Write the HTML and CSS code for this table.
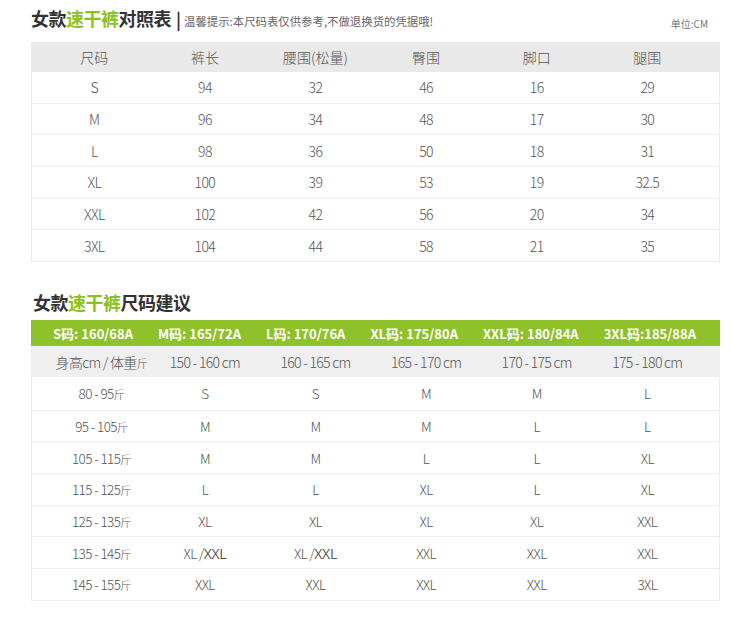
FILE: index.html
```html
<!DOCTYPE html>
<html lang="zh-CN">
<head>
<meta charset="utf-8">
<title>女款速干裤对照表</title>
<link rel="stylesheet" href="styles.css">
</head>
<body>
<div class="page">
  <div class="head1">
    <h2 class="title">女款<span class="green">速干裤</span>对照表</h2>
    <span class="bar">|</span>
    <span class="tip">温馨提示:本尺码表仅供参考,不做退换货的凭据哦!</span>
    <span class="unit">单位:CM</span>
  </div>
  <div class="t1">
    <div class="t1-head row6">
      <span>尺码</span><span>裤长</span><span>腰围(松量)</span><span>臀围</span><span>脚口</span><span>腿围</span>
    </div>
    <div class="t1-row row6"><span>S</span><span>94</span><span>32</span><span>46</span><span>16</span><span>29</span></div>
    <div class="t1-row row6"><span>M</span><span>96</span><span>34</span><span>48</span><span>17</span><span>30</span></div>
    <div class="t1-row row6"><span>L</span><span>98</span><span>36</span><span>50</span><span>18</span><span>31</span></div>
    <div class="t1-row row6"><span>XL</span><span>100</span><span>39</span><span>53</span><span>19</span><span>32.5</span></div>
    <div class="t1-row row6"><span>XXL</span><span>102</span><span>42</span><span>56</span><span>20</span><span>34</span></div>
    <div class="t1-row row6"><span>3XL</span><span>104</span><span>44</span><span>58</span><span>21</span><span>35</span></div>
  </div>

  <h2 class="title title2">女款<span class="green">速干裤</span>尺码建议</h2>
  <div class="t2">
    <div class="t2-green">
      <span>S码: 160/68A</span><span>M码: 165/72A</span><span>L码: 170/76A</span><span>XL码: 175/80A</span><span>XXL码: 180/84A</span><span>3XL码:185/88A</span>
    </div>
    <div class="t2-sub row6">
      <span class="c0">身高cm / 体重<small>斤</small></span><span>150 - 160 cm</span><span>160 - 165 cm</span><span>165 - 170 cm</span><span>170 - 175 cm</span><span>175 - 180 cm</span>
    </div>
    <div class="t2-row row6"><span class="c0">80 - 95<small>斤</small></span><span>S</span><span>S</span><span>M</span><span>M</span><span>L</span></div>
    <div class="t2-row row6"><span class="c0">95 - 105<small>斤</small></span><span>M</span><span>M</span><span>M</span><span>L</span><span>L</span></div>
    <div class="t2-row row6"><span class="c0">105 - 115<small>斤</small></span><span>M</span><span>M</span><span>L</span><span>L</span><span>XL</span></div>
    <div class="t2-row row6"><span class="c0">115 - 125<small>斤</small></span><span>L</span><span>L</span><span>XL</span><span>L</span><span>XL</span></div>
    <div class="t2-row row6"><span class="c0">125 - 135<small>斤</small></span><span>XL</span><span>XL</span><span>XL</span><span>XL</span><span>XXL</span></div>
    <div class="t2-row row6"><span class="c0">135 - 145<small>斤</small></span><span>XL /<b>XXL</b></span><span>XL /<b>XXL</b></span><span>XXL</span><span>XXL</span><span>XXL</span></div>
    <div class="t2-row row6"><span class="c0">145 - 155<small>斤</small></span><span>XXL</span><span>XXL</span><span>XXL</span><span>XXL</span><span>3XL</span></div>
  </div>
</div>
</body>
</html>
```

FILE: styles.css
```css
* { box-sizing: border-box; margin: 0; padding: 0; }
body {
  width: 750px;
  background: #fff;
  font-family: "Noto Sans CJK SC", "Noto Sans", sans-serif;
  color: #555;
}
.page {
  padding-left: 31px;
  width: 720px;
}
.head1 {
  display: flex;
  align-items: baseline;
  height: 42px;
  padding-top: 6px;
}
.title {
  font-size: 18px;
  font-weight: 700;
  color: #333;
  line-height: 24px;
  letter-spacing: -0.5px;
}
.green { color: #8cc11f; }
.bar {
  font-size: 17px;
  font-weight: 700;
  color: #333;
  margin-left: 5px;
  margin-right: 3px;
}
.tip {
  font-size: 11.4px;
  color: #666;
  letter-spacing: 0;
}
.unit {
  margin-left: auto;
  margin-right: 12px;
  font-size: 10px;
  color: #777;
  position: relative;
  top: 2px;
}
.row6 {
  display: grid;
  grid-template-columns: repeat(6, 110.6px);
  padding-left: 7px;
  align-items: center;
  text-align: center;
}
.t1 {
  width: 689px;
  border-left: 1px solid #ececec;
  border-right: 1px solid #ececec;
}
.t1-head {
  background: #e9e9e9;
  height: 30px;
  font-size: 14px;
  font-weight: 300;
  color: #555;
  margin: 0 -1px;
  padding-left: 8px;
}
.t1-row {
  height: 31.7px;
  border-bottom: 1.5px solid #ededed;
  font-size: 14px;
  font-weight: 300;
  letter-spacing: -0.6px;
}
.t1-row:first-of-type { height: 33px; }
.title2 {
  margin-top: 28px;
  margin-left: 2px;
  height: 30px;
}
.t2 {
  width: 689px;
  border-left: 1px solid #ececec;
  border-right: 1px solid #ececec;
}
.t2-green {
  background: #8fc12a;
  height: 26px;
  margin: 0 -1px;
  display: flex;
  justify-content: space-between;
  align-items: center;
  padding: 0 24px 0 22px;
  color: #fff;
  font-size: 13px;
  font-weight: 700;
}
.t2-sub {
  background: #efeff0;
  height: 31px;
  margin: 0 -1px;
  padding-left: 8px;
  font-size: 14px;
  font-weight: 300;
  letter-spacing: -0.7px;
}
.t2-row {
  height: 31.7px;
  border-bottom: 1.5px solid #ededed;
  font-size: 13.5px;
  font-weight: 300;
  letter-spacing: -0.6px;
}
.t2-sub + .t2-row { height: 33.5px; }
.c0 { padding-left: 14px; }
small { font-size: 11px; }
b {
  font-family: "Open Sans", sans-serif;
  font-weight: 500;
  color: #555;
  font-size: 14px;
  letter-spacing: -0.3px;
}
```
